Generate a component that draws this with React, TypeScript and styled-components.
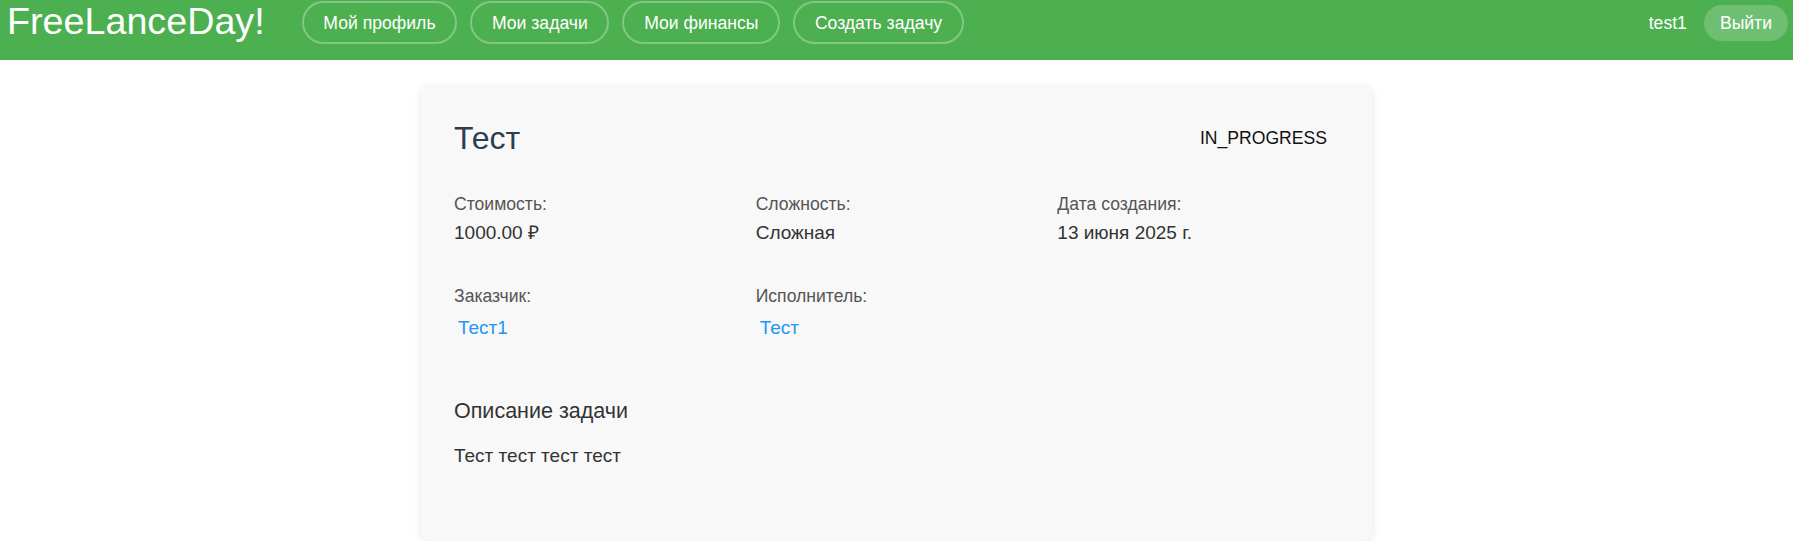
import React, { FC } from 'react'
import styled, { createGlobalStyle } from 'styled-components'

const GlobalStyle = createGlobalStyle`
  html, body {
    margin: 0;
    padding: 0;
    background: #fff;
    font-family: 'Liberation Sans', Arial, sans-serif;
  }
  * {
    box-sizing: border-box;
  }
`

const Header = styled.header`
  display: flex;
  align-items: flex-start;
  height: 60px;
  padding: 0 5px 0 7px;
  background: #4caf50;
  color: #fff;
`

const Logo = styled.div`
  font-size: 37.7px;
  line-height: 42px;
  white-space: nowrap;
`

const Nav = styled.nav`
  display: flex;
  gap: 13px;
  margin-left: 37px;
  margin-top: 1px;
`

const NavButton = styled.button`
  font-family: inherit;
  font-size: 17.6px;
  line-height: 20px;
  color: #fff;
  background: transparent;
  border: 2px solid rgba(255, 255, 255, 0.3);
  border-radius: 24px;
  padding: 9.5px 19.7px;
  cursor: pointer;
  white-space: nowrap;
`

const UserBox = styled.div`
  display: flex;
  align-items: center;
  gap: 17px;
  margin-left: auto;
  margin-top: 5px;
`

const UserName = styled.span`
  font-size: 17.6px;
  line-height: 20px;
`

const LogoutButton = styled.button`
  font-family: inherit;
  font-size: 17.6px;
  line-height: 20px;
  color: #fff;
  background: rgba(255, 255, 255, 0.2);
  border: none;
  border-radius: 18px;
  padding: 8px 16px;
  cursor: pointer;
`

const Card = styled.main`
  max-width: 951px;
  margin: 25px auto 0;
  padding: 33px 33px 34px;
  background: #f8f8f8;
  border-radius: 9px;
  box-shadow: 0 2px 8px rgba(0, 0, 0, 0.1);
`

const CardHead = styled.div`
  display: flex;
  align-items: center;
  justify-content: space-between;
`

const Title = styled.h1`
  margin: 0;
  font-size: 32px;
  line-height: 40px;
  font-weight: 400;
  color: #2c3e50;
`

const Status = styled.span`
  font-size: 17.6px;
  line-height: 20px;
  padding: 6px 12px;
  border-radius: 14px;
  color: #111;
`

const Grid = styled.div`
  display: grid;
  grid-template-columns: repeat(3, 1fr);
  column-gap: 20px;
  row-gap: 41.5px;
  margin-top: 36px;
`

const Field = styled.div`
  display: flex;
  flex-direction: column;
  align-items: flex-start;
`

const Label = styled.span`
  font-size: 17.6px;
  line-height: 20px;
  color: #555;
  margin-bottom: 8px;
`

const Value = styled.span`
  font-size: 19px;
  line-height: 22px;
  color: #333;
`

const UserLink = styled.a`
  font-size: 19px;
  line-height: 22px;
  padding: 3px 4px;
  color: #2196f3;
  text-decoration: none;
  cursor: pointer;
`

const Description = styled.section`
  margin-top: 57px;
  padding-bottom: 40px;
`

const DescTitle = styled.h3`
  margin: 0;
  font-size: 21.5px;
  line-height: 25px;
  font-weight: 400;
  color: #333;
`

const DescText = styled.p`
  margin: 21px 0 0;
  font-size: 19px;
  line-height: 22px;
  color: #333;
`

const navItems = ['Мой профиль', 'Мои задачи', 'Мои финансы', 'Создать задачу']

const App: FC = () => {
  return (
    <>
      <GlobalStyle />

      <Header>
        <Logo>FreeLanceDay!</Logo>
        <Nav>
          {navItems.map((item) => (
            <NavButton key={item}>{item}</NavButton>
          ))}
        </Nav>
        <UserBox>
          <UserName>test1</UserName>
          <LogoutButton>Выйти</LogoutButton>
        </UserBox>
      </Header>

      <Card>
        <CardHead>
          <Title>Тест</Title>
          <Status>IN_PROGRESS</Status>
        </CardHead>

        <Grid>
          <Field>
            <Label>Стоимость:</Label>
            <Value>1000.00 ₽</Value>
          </Field>
          <Field>
            <Label>Сложность:</Label>
            <Value>Сложная</Value>
          </Field>
          <Field>
            <Label>Дата создания:</Label>
            <Value>13 июня 2025 г.</Value>
          </Field>
          <Field>
            <Label>Заказчик:</Label>
            <UserLink>Тест1</UserLink>
          </Field>
          <Field>
            <Label>Исполнитель:</Label>
            <UserLink>Тест</UserLink>
          </Field>
        </Grid>

        <Description>
          <DescTitle>Описание задачи</DescTitle>
          <DescText>Тест тест тест тест</DescText>
        </Description>
      </Card>
    </>
  )
}

export default App
